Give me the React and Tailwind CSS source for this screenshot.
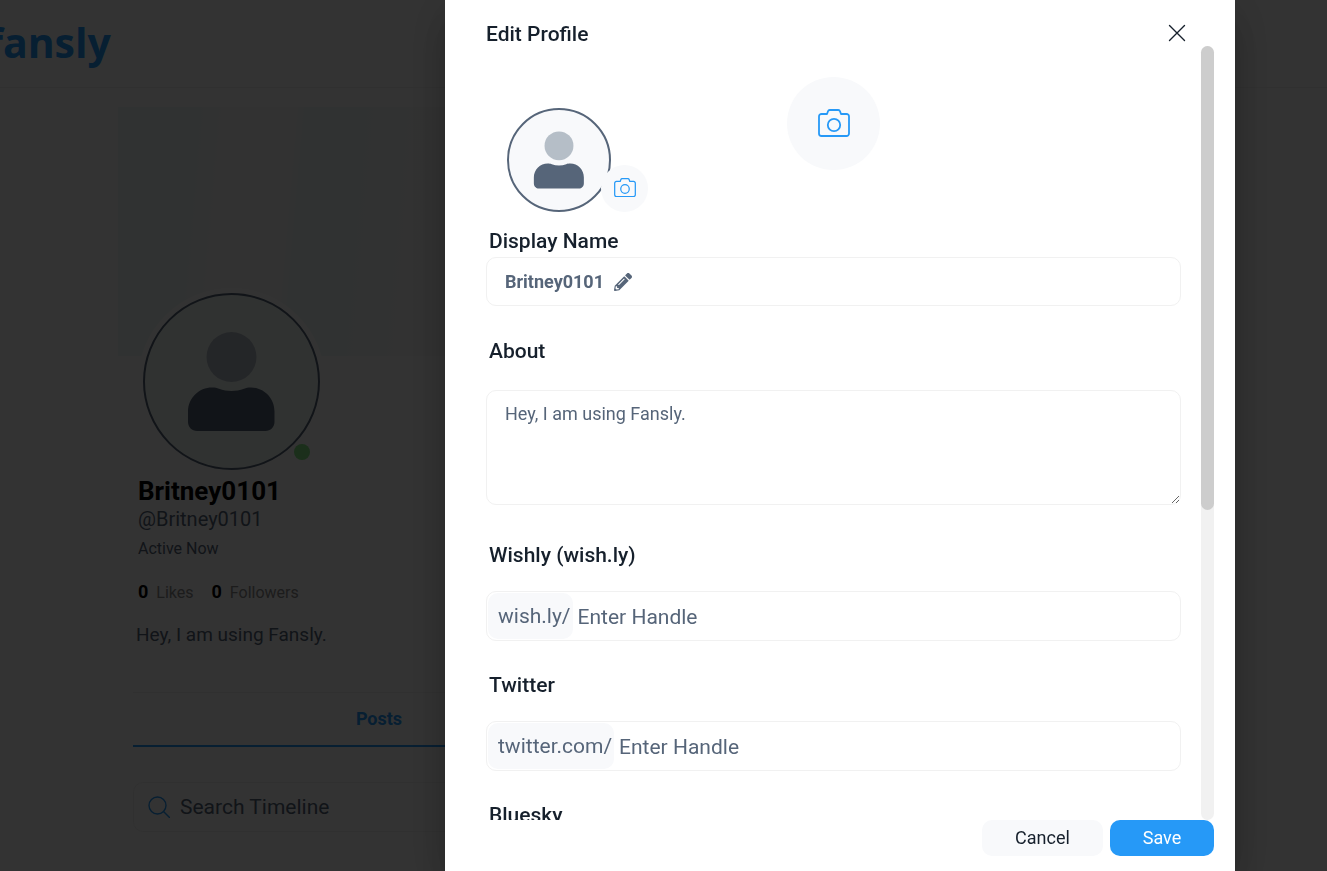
import { useState } from 'react';
import { FaPencilAlt } from 'react-icons/fa';

function CameraIcon({ className }) {
  return (
    <svg viewBox="0 0 32 28" fill="none" stroke="#2699f7" className={className} aria-hidden>
      <path
        d="M3.500 5H9l1-2.800A1.800 1.800 0 0 1 11.700 1h8.600a1.800 1.800 0 0 1 1.700 1.200L23 5h5.500A2.500 2.500 0 0 1 31 7.500v17a2.500 2.500 0 0 1-2.500 2.500h-25A2.500 2.500 0 0 1 1 24.500v-17A2.500 2.500 0 0 1 3.500 5Z"
        strokeWidth="1.8"
        strokeLinejoin="round"
      />
      <circle cx="16" cy="16" r="6.2" strokeWidth="1.8" />
    </svg>
  );
}

function SearchIcon({ className }) {
  return (
    <svg viewBox="0 0 22 22" fill="none" stroke="#2699f7" strokeWidth="1.4" className={className} aria-hidden>
      <circle cx="9.5" cy="9.5" r="8.5" />
      <path d="m15.5 15.5 6 6" strokeLinecap="round" />
    </svg>
  );
}

function Avatar({ className }) {
  return (
    <svg viewBox="0 0 173 173" className={className} role="img" aria-label="Profile avatar">
      <circle cx="86.5" cy="62" r="25" fill="#b5bec7" />
      <path
        d="M67 92.500c3 0 5 .300 7 1.200 8 3 17 3 25 0 2-.900 4-1.200 7-1.200 13 0 23.500 10.500 23.500 24V127c0 5-4 9-9 9H52c-5 0-9-4-9-9v-10.500c0-13.500 11-24 24-24Z"
        fill="#566579"
      />
    </svg>
  );
}

function HandleField({ id, label, prefix }) {
  const [value, setValue] = useState('');

  return (
    <div>
      <label htmlFor={id} className="block pl-[3px] text-[21px] leading-6 font-medium">
        {label}
      </label>
      <div className="mt-6 flex h-[50px] items-center rounded-[10px] border border-[#f1f1f1] p-px text-[21px] text-[#566579]">
        <span className="flex h-full items-center rounded-[10px] bg-[#f8f9fb] pt-[2px] pr-[2px] pl-[10px]">{prefix}</span>
        <input
          id={id}
          type="text"
          value={value}
          onChange={(e) => setValue(e.target.value)}
          placeholder="Enter Handle"
          className="h-full min-w-0 flex-1 px-[5px] pt-[2px] outline-none placeholder:text-[#566579]"
        />
      </div>
    </div>
  );
}

function ProfilePage() {
  return (
    <div className="h-full overflow-hidden bg-white">
      <header className="flex h-[88px] items-center border-b border-[#f1f1f1] pb-px">
        <a href="#home" className="-ml-[13px] font-['Open_Sans',sans-serif] text-[41px] font-bold text-[#2699f7]">
          fansly
        </a>
      </header>

      <main className="mt-[19px] mr-[195px] ml-[118px]">
        <div className="h-[249px] bg-[linear-gradient(95deg,#f1fbf7_0%,#f1fbf7_8%,#fafafa_11%,#fafafa_17%,#f1fbf7_18%,#f1fbf7_24%,#fafafa_31%)]" />
        <div className="px-[15px]">
          <div className="relative -mt-[63px] ml-[10px] size-[177px] rounded-full border-2 border-[#566579] bg-[#f1f9f6] ring-5 ring-white">
            <Avatar className="size-full" />
            <span className="absolute right-2 bottom-2 size-4 rounded-full bg-[#85e885]" />
          </div>

          <div className="mt-1 pl-[5px]">
            <h1 className="text-[26px] leading-[34px] font-bold text-black">Britney0101</h1>
            <p className="text-xl leading-[22px] text-[#566579]">@Britney0101</p>
            <p className="mt-2 text-base leading-[22px] text-[#566579]">Active Now</p>
            <div className="mt-5 flex gap-[18px] text-base leading-6 text-[#8c8c8c]">
              <span>
                <b className="mr-2 text-lg leading-6 font-bold text-black">0</b>Likes
              </span>
              <span>
                <b className="mr-2 text-lg leading-6 font-bold text-black">0</b>Followers
              </span>
            </div>
          </div>
          <p className="mt-4 pl-[3px] text-[19px] leading-7 text-[#566579]">Hey, I am using Fansly.</p>

          <nav className="mt-[43px] flex border-t border-[#f1f1f1]">
            <a
              href="#posts"
              className="flex h-[54px] w-1/2 items-center justify-center border-b-2 border-[#2699f7] text-lg font-bold text-[#2699f7]"
            >
              Posts
            </a>
          </nav>

          <div className="mt-[35px] flex h-[50px] items-center gap-[10px] rounded-[10px] border border-[#f1f1f1] px-[14px]">
            <SearchIcon className="size-[22px]" />
            <input
              type="text"
              aria-label="Search Timeline"
              placeholder="Search Timeline"
              className="min-w-0 flex-1 pt-[2px] text-[21px] outline-none placeholder:text-[#566579]"
            />
          </div>
        </div>
      </main>
    </div>
  );
}

function EditProfileModal() {
  const [about, setAbout] = useState('Hey, I am using Fansly.');

  return (
    <div
      role="dialog"
      aria-label="Edit Profile"
      className="flex h-full w-[790px] max-w-full flex-col bg-white text-[#16202c] shadow-[0_11px_15px_-7px_rgba(0,0,0,0.2),0_24px_38px_3px_rgba(0,0,0,0.14),0_9px_46px_8px_rgba(0,0,0,0.12)]"
    >
      <div className="flex h-[46px] shrink-0 items-center justify-between pt-5 pr-12 pl-[41px]">
        <h2 className="pt-px text-[21px] leading-7 font-medium">Edit Profile</h2>
        <button type="button" aria-label="Close">
          <svg viewBox="0 0 20 20" className="size-5" fill="none" stroke="#16202c" strokeWidth="1.4" strokeLinecap="round">
            <path d="m2.500 2.500 15 15m0-15-15 15" />
          </svg>
        </button>
      </div>

      <div className="mr-[21px] flex min-h-0 flex-1">
        <div className="min-w-0 flex-1 overflow-y-auto pr-5 pl-[41px] [scrollbar-width:none]">
          <div className="relative h-[182px] pt-[31px]">
            <button
              type="button"
              aria-label="Change banner"
              className="mx-auto flex size-[93px] items-center justify-center rounded-full bg-[#f8f9fb] pb-px"
            >
              <CameraIcon className="w-8" />
            </button>
            <div className="absolute top-[62px] left-[21px] size-[104px] rounded-full border-2 border-[#566579] bg-[#f8f9fb]">
              <Avatar className="size-full" />
            </div>
            <button
              type="button"
              aria-label="Change avatar"
              className="absolute top-[119px] left-[115px] flex size-[47px] items-center justify-center rounded-full bg-[#f8f9fb] pb-[2px]"
            >
              <CameraIcon className="w-[22px]" />
            </button>
          </div>

          <h3 className="mb-[2px] pl-[3px] text-[21px] leading-[27px] font-medium">Display Name</h3>
          <button
            type="button"
            className="flex h-[49px] w-full items-center gap-[10px] rounded-[10px] border border-[#f1f1f1] px-[18px] text-lg font-bold text-[#566579]"
          >
            Britney0101
            <FaPencilAlt className="size-[18px]" aria-hidden />
          </button>

          <label htmlFor="about" className="mt-8 block pl-[3px] text-[21px] leading-[26px] font-medium">
            About
          </label>
          <textarea
            id="about"
            value={about}
            onChange={(e) => setAbout(e.target.value)}
            className="mt-[26px] block h-[115px] w-full resize-y rounded-[10px] border border-[#f1f1f1] px-[18px] py-[9px] text-lg text-[#566579] outline-none"
          />

          <div className="mt-[38px] flex flex-col gap-8 pb-10">
            <HandleField id="wishly" label="Wishly (wish.ly)" prefix="wish.ly/" />
            <HandleField id="twitter" label="Twitter" prefix="twitter.com/" />
            <HandleField id="bluesky" label="Bluesky" prefix="bsky.app/" />
          </div>
        </div>

        <div className="w-[13px] rounded-full bg-[#f1f1f1]" aria-hidden>
          <div className="h-3/5 rounded-full bg-[#cdcdcd]" />
        </div>
      </div>

      <div className="flex shrink-0 justify-end gap-[7px] pr-[21px] pb-[15px] text-lg">
        <button type="button" className="h-9 min-w-[121px] rounded-[10px] bg-[#f8f9fb] px-8">
          Cancel
        </button>
        <button type="button" className="h-9 min-w-[104px] rounded-[10px] bg-[#2699f7] px-8 text-white">
          Save
        </button>
      </div>
    </div>
  );
}

export default function App() {
  return (
    <div className="h-screen overflow-hidden font-[Roboto,sans-serif]">
      <ProfilePage />
      <div className="fixed inset-0 flex justify-end bg-black/80 pr-[92px]">
        <EditProfileModal />
      </div>
    </div>
  );
}
